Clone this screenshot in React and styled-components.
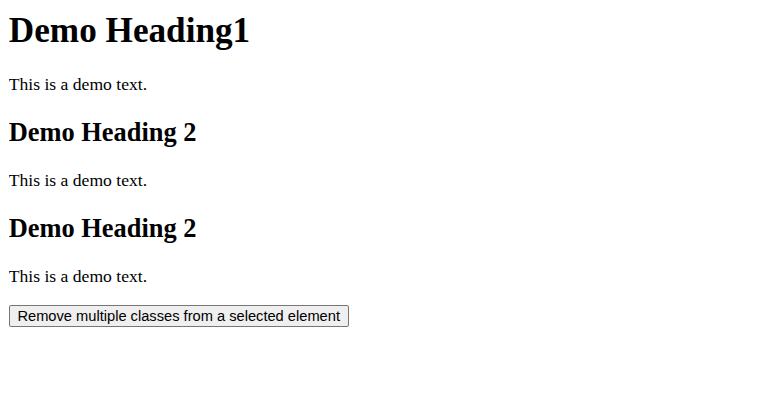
import React from "react";
import styled, { createGlobalStyle } from "styled-components";

// reference is drawn at 110% zoom, so the default sizes are scaled by 1.1
const GlobalStyle = createGlobalStyle`
    body {
        margin: 8.8px;
        background: #fff;
        color: #000;
        font-family: "Liberation Serif", "Times New Roman", serif;
    }
`;

const Heading1 = styled.h1`
    font-size: 35.2px;
    font-weight: bold;
    margin: 2px 0 23.6px;
`;

const Heading2 = styled.h2`
    font-size: 26.4px;
    font-weight: bold;
    margin: 21.9px 0;
`;

const Text = styled.p`
    font-size: 17.6px;
    margin: 17.6px 0;
`;

const Button = styled.button`
    font-family: "Liberation Sans", Arial, sans-serif;
    font-size: 14.67px;
    color: #000;
    background-color: #efefef;
    border: 1px solid #767676;
    border-radius: 2px;
    padding: 2px 7.6px;
    margin: 0;
    cursor: pointer;

    &:hover {
        background-color: #e5e5e5;
    }
`;

const App = () => {
    return (
        <>
            <GlobalStyle />
            <Heading1>Demo Heading1</Heading1>
            <Text>This is a demo text.</Text>
            <Heading2>Demo Heading 2</Heading2>
            <Text>This is a demo text.</Text>
            <Heading2>Demo Heading 2</Heading2>
            <Text>This is a demo text.</Text>
            <Button>Remove multiple classes from a selected element</Button>
        </>
    );
};

export default App;
